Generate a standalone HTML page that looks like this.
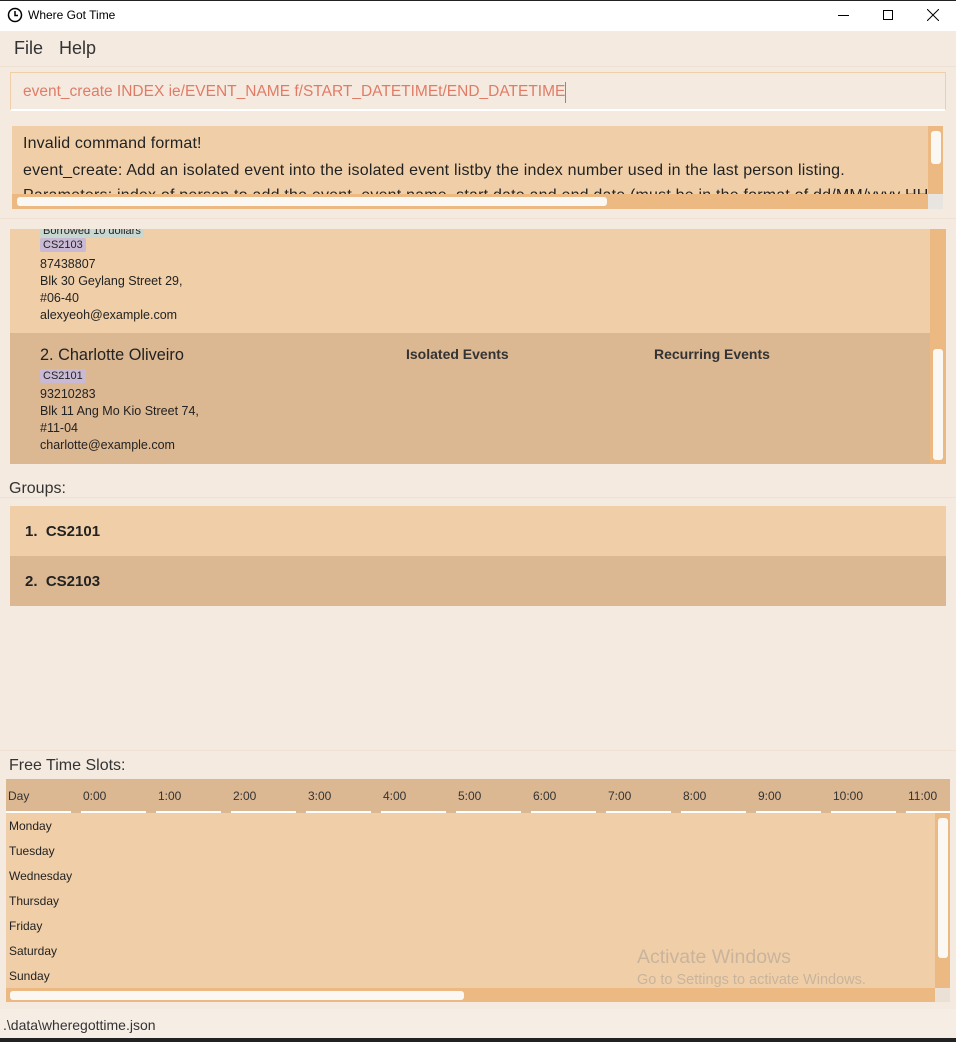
<!DOCTYPE html><html><head><style>
*{margin:0;padding:0;box-sizing:border-box}
body{width:956px;height:1042px;background:#f4eae0;font-family:"Liberation Sans",sans-serif;position:relative;overflow:hidden;color:#222}
.a{position:absolute;white-space:nowrap}
.tag{position:absolute;font-size:11px;padding:1px 3px;border-radius:2px}
.sm{font-size:12.5px;line-height:17px}
</style></head><body>
<div class="a" style="left:0;top:0;width:956px;height:1px;background:#222"></div>
<div class="a" style="left:0;top:1px;width:956px;height:30px;background:#fff"></div>
<svg class="a" style="left:7px;top:7px" width="16" height="16" viewBox="0 0 16 16"><circle cx="8" cy="8" r="6.5" fill="none" stroke="#000" stroke-width="1.5"/><path d="M8 4V8.5H11" fill="none" stroke="#000" stroke-width="1.5"/></svg>
<div class="a" style="left:28px;top:8px;font-size:12px;color:#000">Where Got Time</div>
<div class="a" style="left:838px;top:15px;width:11px;height:1px;background:#000"></div>
<div class="a" style="left:883px;top:10px;width:10px;height:10px;border:1px solid #000"></div>
<svg class="a" style="left:927px;top:9px" width="12" height="12"><path d="M0 0L12 12M12 0L0 12" stroke="#000"/></svg>
<div class="a" style="left:14px;top:38px;font-size:18px;color:#333">File</div>
<div class="a" style="left:59px;top:38px;font-size:18px;color:#333">Help</div>
<div class="a" style="left:0;top:66px;width:956px;height:1px;background:#efe2d5"></div>
<div class="a" style="left:10px;top:72px;width:936px;height:39px;border:1px solid #f0cfa8;border-bottom:2px solid #fff"></div>
<div class="a" style="left:23px;top:83px;font-size:15.5px;color:#e07c66">event_create INDEX ie/EVENT_NAME f/START_DATETIMEt/END_DATETIME</div>
<div class="a" style="left:565px;top:82px;width:1px;height:21px;background:#d66"></div>
<div class="a" style="left:12px;top:126px;width:916px;height:68px;background:#f0cfa8;overflow:hidden">
<div class="a" style="left:11px;top:9px;font-size:16px;letter-spacing:0.15px">Invalid command format!</div>
<div class="a" style="left:11px;top:36px;font-size:16px;letter-spacing:0.2px">event_create: Add an isolated event into the isolated event listby the index number used in the last person listing.</div>
<div class="a" style="left:11px;top:61px;font-size:16px;letter-spacing:0.2px">Parameters: index of person to add the event, event name, start date and end date (must be in the format of dd/MM/yyyy HH</div>
</div>
<div class="a" style="left:928px;top:126px;width:15px;height:68px;background:#ebb981"></div>
<div class="a" style="left:931px;top:131px;width:10px;height:33px;background:#fbf7f2;border-radius:3px"></div>
<div class="a" style="left:12px;top:194px;width:916px;height:15px;background:#ebb981"></div>
<div class="a" style="left:17px;top:197px;width:590px;height:9px;background:#fbf7f2;border-radius:3px"></div>
<div class="a" style="left:928px;top:194px;width:15px;height:15px;background:#e8e4e0"></div>
<div class="a" style="left:0;top:218px;width:956px;height:1px;background:#efe2d5"></div>
<div class="a" style="left:10px;top:229px;width:920px;height:104px;background:#f0cfa8;overflow:hidden">
<div class="tag" style="left:30px;top:-5px;background:#c8d8d0">Borrowed 10 dollars</div>
<div class="tag" style="left:30px;top:9px;background:#c9b9d5">CS2103</div>
<div class="a sm" style="left:30px;top:27px">87438807</div>
<div class="a sm" style="left:30px;top:44px">Blk 30 Geylang Street 29,</div>
<div class="a sm" style="left:30px;top:61px">#06-40</div>
<div class="a sm" style="left:30px;top:78px">alexyeoh@example.com</div>
</div>
<div class="a" style="left:10px;top:333px;width:920px;height:131px;background:#dbb792">
<div class="a" style="left:30px;top:13px;font-size:16.3px;font-weight:500">2. Charlotte Oliveiro</div>
<div class="a" style="left:396px;top:13px;font-size:14px;font-weight:bold;color:#333">Isolated Events</div>
<div class="a" style="left:644px;top:13px;font-size:14px;font-weight:bold;color:#333">Recurring Events</div>
<div class="tag" style="left:30px;top:36px;background:#c9b9d5">CS2101</div>
<div class="a sm" style="left:30px;top:53px">93210283</div>
<div class="a sm" style="left:30px;top:70px">Blk 11 Ang Mo Kio Street 74,</div>
<div class="a sm" style="left:30px;top:87px">#11-04</div>
<div class="a sm" style="left:30px;top:104px">charlotte@example.com</div>
</div>
<div class="a" style="left:930px;top:229px;width:16px;height:235px;background:#ebb981"></div>
<div class="a" style="left:933px;top:349px;width:10px;height:111px;background:#fbf7f2;border-radius:3px"></div>
<div class="a" style="left:9px;top:480px;font-size:16px;color:#333">Groups:</div>
<div class="a" style="left:0;top:497px;width:956px;height:1px;background:#efe2d5"></div>
<div class="a" style="left:10px;top:506px;width:936px;height:50px;background:#f0cfa8"><div class="a" style="left:15px;top:17px;font-size:15px;font-weight:bold">1.&nbsp; CS2101</div></div>
<div class="a" style="left:10px;top:556px;width:936px;height:50px;background:#dbb792"><div class="a" style="left:15px;top:17px;font-size:15px;font-weight:bold">2.&nbsp; CS2103</div></div>
<div class="a" style="left:0;top:750px;width:956px;height:1px;background:#efe2d5"></div>
<div class="a" style="left:9px;top:757px;font-size:16px;color:#333">Free Time Slots:</div>
<div class="a" style="left:6px;top:779px;width:944px;height:34px;background:#dbb792;overflow:hidden" id="hd"></div>
<div class="a" style="left:6px;top:813px;width:929px;height:175px;background:#f0cfa8">
<div class="a" style="left:3px;top:1px;font-size:12px;line-height:25px">Monday<br>Tuesday<br>Wednesday<br>Thursday<br>Friday<br>Saturday<br>Sunday</div>
<div class="a" style="left:631px;top:133px;font-size:19.5px;color:#c8b49c">Activate Windows</div>
<div class="a" style="left:631px;top:159px;font-size:14.5px;color:#c8b49c">Go to Settings to activate Windows.</div>
</div>
<div class="a" style="left:935px;top:813px;width:15px;height:175px;background:#ebb981"></div>
<div class="a" style="left:938px;top:818px;width:10px;height:140px;background:#fbf7f2;border-radius:3px"></div>
<div class="a" style="left:6px;top:988px;width:929px;height:14px;background:#ebb981"></div>
<div class="a" style="left:10px;top:991px;width:454px;height:9px;background:#fbf7f2;border-radius:3px"></div>
<div class="a" style="left:935px;top:988px;width:15px;height:14px;background:#ebe0d5"></div>
<div class="a" style="left:0;top:1009px;width:956px;height:29px;background:#f6eee5"></div>
<div class="a" style="left:3px;top:1017px;font-size:14px;color:#333">.\data\wheregottime.json</div>
<div class="a" style="left:0;top:1038px;width:956px;height:4px;background:#222"></div>
<script>
var h=document.getElementById('hd'),s='';
var l=['Day','0:00','1:00','2:00','3:00','4:00','5:00','6:00','7:00','8:00','9:00','10:00','11:00'];
for(var i=0;i<l.length;i++){var x=i*75;s+='<div class="a" style="left:'+(x+2)+'px;top:10px;font-size:12px;color:#333">'+l[i]+'</div><div class="a" style="left:'+x+'px;top:32px;width:65px;height:2px;background:#fff"></div>';}
h.innerHTML=s;
</script>
</body></html>
